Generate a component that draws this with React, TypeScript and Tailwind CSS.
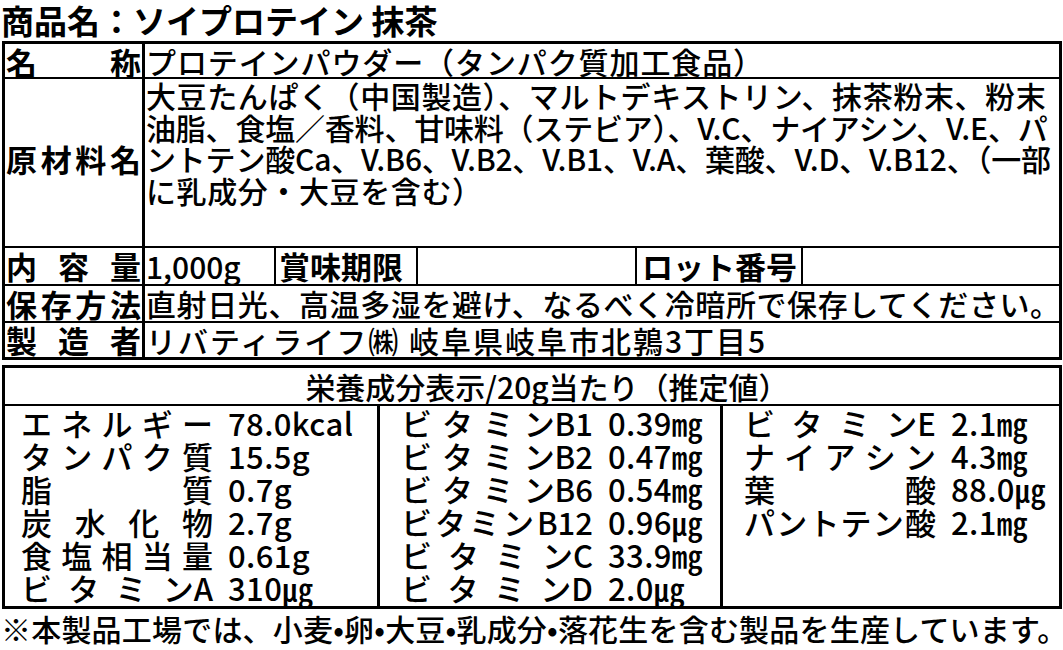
import React from "react";

const J = ({ parts, className }: { parts: string[]; className: string }) => (
  <div className={"flex justify-between " + className}>
    {parts.map((p, i) => (
      <span key={i}>{p}</span>
    ))}
  </div>
);

type NRow = { l: string[]; v: React.ReactNode };

const col1: NRow[] = [
  { l: ["エ", "ネ", "ル", "ギ", "ー"], v: "78.0kcal" },
  { l: ["タ", "ン", "パ", "ク", "質"], v: "15.5g" },
  { l: ["脂", "質"], v: "0.7g" },
  { l: ["炭", "水", "化", "物"], v: "2.7g" },
  { l: ["食", "塩", "相", "当", "量"], v: "0.61g" },
  { l: ["ビ", "タ", "ミ", "ンA"], v: "310㎍" },
];
const col2: NRow[] = [
  { l: ["ビ", "タ", "ミ", "ンB1"], v: "0.39㎎" },
  { l: ["ビ", "タ", "ミ", "ンB2"], v: "0.47㎎" },
  { l: ["ビ", "タ", "ミ", "ンB6"], v: "0.54㎎" },
  { l: ["ビ", "タ", "ミ", "ン", "B12"], v: "0.96㎍" },
  { l: ["ビ", "タ", "ミ", "ンC"], v: "33.9㎎" },
  { l: ["ビ", "タ", "ミ", "ンD"], v: "2.0㎍" },
];
const col3: NRow[] = [
  { l: ["ビ", "タ", "ミ", "ンE"], v: "2.1㎎" },
  { l: ["ナ", "イ", "ア", "シ", "ン"], v: "4.3㎎" },
  { l: ["葉", "酸"], v: "88.0㎍" },
  { l: ["パ", "ン", "ト", "テ", "ン", "酸"], v: "2.1㎎" },
];

const NCol = ({ rows }: { rows: NRow[] }) => (
  <div className="flex flex-col pt-[1px]">
    {rows.map((r, i) => (
      <div key={i} className="flex h-[33px] items-center whitespace-nowrap">
        <J parts={r.l} className="w-[192px]" />
        <span className="ml-[15px] tracking-[0.4px]">{r.v}</span>
      </div>
    ))}
  </div>
);

export default function App() {
  return (
    <div className="w-[1063px] h-[650px] overflow-hidden bg-white text-black font-medium font-['Noto_Sans_CJK_JP',sans-serif]">
      {/* Title */}
      <div className="h-[41px] pl-[1px] text-[33px] font-bold leading-[41px] whitespace-nowrap">
        商品名：ソイプロテイン 抹茶
      </div>

      {/* Table 1 */}
      <div className="ml-[2px] w-[1060px] border-[3px] border-black text-[30px]">
        {/* 名称 */}
        <div className="flex h-[35px] border-b-2 border-black">
          <J parts={["名", "称"]} className="w-[140px] shrink-0 border-r-[3px] border-black px-[1px] text-[31px] font-bold leading-[35px]" />
          <div className="pl-[1px] leading-[35px] tracking-[0.9px] whitespace-nowrap">プロテインパウダー（タンパク質加工食品）</div>
        </div>
        {/* 原材料名 */}
        <div className="flex h-[169px] border-b-2 border-black">
          <div className="flex w-[140px] shrink-0 items-center border-r-[3px] border-black px-[1px] pb-[8px]">
            <J parts={["原", "材", "料", "名"]} className="w-full text-[31px] font-bold leading-[35px]" />
          </div>
          <div className="pl-[1px] pt-[1px] leading-[31.5px] whitespace-nowrap">
            <div className="tracking-[0.6px]">大豆たんぱく（中国製造）、マルトデキストリン、抹茶粉末、粉末</div>
            <div className="tracking-[-0.2px]">油脂、食塩／香料、甘味料（ステビア）、V.C、ナイアシン、V.E、パ</div>
            <div className="tracking-[-0.2px]">ントテン酸Ca、V.B6、V.B2、V.B1、V.A、葉酸、V.D、V.B12、（一部</div>
            <div className="tracking-[0.6px]">に乳成分・大豆を含む）</div>
          </div>
        </div>
        {/* 内容量 */}
        <div className="flex h-[38px] border-b-2 border-black">
          <J parts={["内", "容", "量"]} className="w-[140px] shrink-0 border-r-[3px] border-black px-[1px] text-[31px] font-bold leading-[36px]" />
          <div className="w-[131px] shrink-0 border-r-2 border-black pl-[1px] leading-[36px]">1,000g</div>
          <div className="w-[142px] shrink-0 border-r-2 border-black pl-[3px] text-[31px] font-bold leading-[36px]">賞味期限</div>
          <div className="w-[219px] shrink-0 border-r-2 border-black"></div>
          <div className="w-[166px] shrink-0 border-r-2 border-black pl-[5px] text-[31px] font-bold leading-[36px]">ロット番号</div>
          <div className="flex-1"></div>
        </div>
        {/* 保存方法 */}
        <div className="flex h-[37px] border-b-2 border-black">
          <J parts={["保", "存", "方", "法"]} className="w-[140px] shrink-0 border-r-[3px] border-black px-[1px] text-[31px] font-bold leading-[35px]" />
          <div className="pl-[1px] leading-[35px] tracking-[0.6px] whitespace-nowrap">直射日光、高温多湿を避け、なるべく冷暗所で保存してください。</div>
        </div>
        {/* 製造者 */}
        <div className="flex h-[34px]">
          <J parts={["製", "造", "者"]} className="w-[140px] shrink-0 border-r-[3px] border-black px-[1px] text-[31px] font-bold leading-[34px]" />
          <div className="pl-[1px] leading-[34px] tracking-[2px] whitespace-nowrap">リバティライフ㈱ 岐阜県岐阜市北鶉3丁目5</div>
        </div>
      </div>

      {/* Table 2 */}
      <div className="ml-[2px] mt-[5px] w-[1060px] border-[3px] border-black text-[31px]">
        <div className="h-[38px] border-b-2 border-black pl-[30px] text-center text-[30px] leading-[36px] whitespace-nowrap">
          栄養成分表示/20g当たり（推定値）
        </div>
        <div className="flex h-[200px]">
          <div className="w-[375px] shrink-0 border-r-[3px] border-black pl-[16px] pr-0">
            <NCol rows={col1} />
          </div>
          <div className="w-[343px] shrink-0 border-r-[3px] border-black pl-[21px]">
            <NCol rows={col2} />
          </div>
          <div className="flex-1 pl-[21px]">
            <NCol rows={col3} />
          </div>
        </div>
      </div>

      {/* Footnote */}
      <div className="h-[39px] pl-[1px] text-[30px] leading-[38px] tracking-[0.2px] whitespace-nowrap">
        ※本製品工場では、小麦•卵•大豆•乳成分•落花生を含む製品を生産しています。
      </div>
    </div>
  );
}
